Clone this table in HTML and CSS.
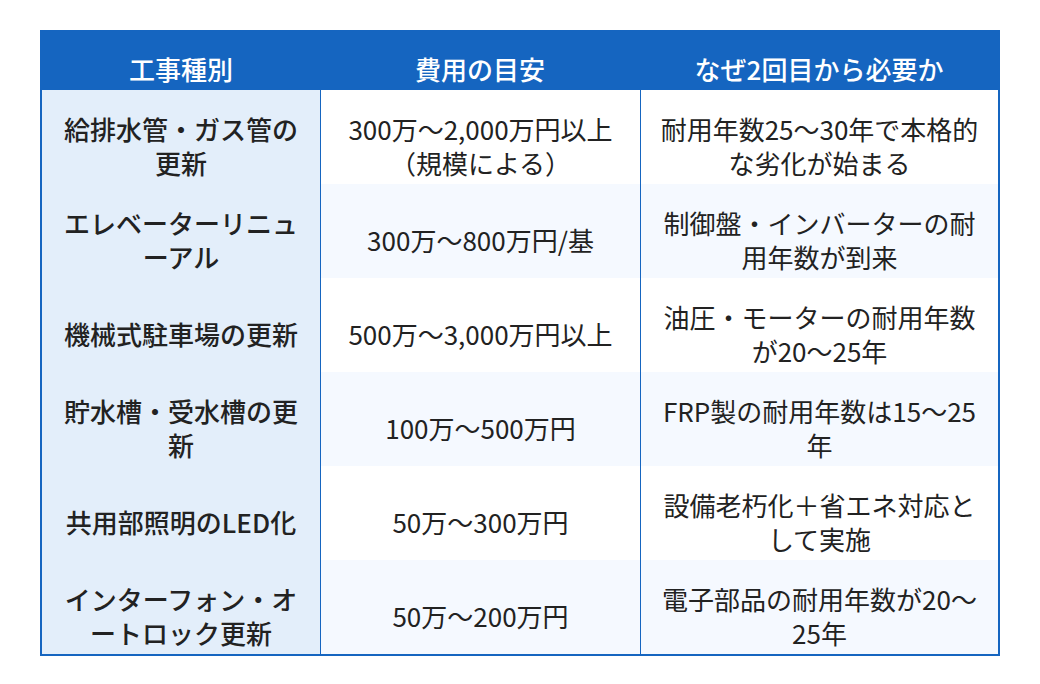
FILE: index.html
```html
<!DOCTYPE html>
<html lang="ja">
<head>
<meta charset="utf-8">
<title>2回目の大規模修繕で必要になる工事</title>
<link rel="stylesheet" href="styles.css">
</head>
<body>
<table class="cost-table">
  <colgroup>
    <col class="col-type">
    <col class="col-cost">
    <col class="col-reason">
  </colgroup>
  <thead>
    <tr>
      <th>工事種別</th>
      <th>費用の目安</th>
      <th>なぜ2回目から必要か</th>
    </tr>
  </thead>
  <tbody>
    <tr>
      <td class="type">給排水管・ガス管の更新</td>
      <td>300万～2,000万円以上（規模による）</td>
      <td>耐用年数25～30年で本格的な劣化が始まる</td>
    </tr>
    <tr>
      <td class="type">エレベーターリニューアル</td>
      <td>300万～800万円/基</td>
      <td>制御盤・インバーターの耐用年数が到来</td>
    </tr>
    <tr>
      <td class="type">機械式駐車場の更新</td>
      <td>500万～3,000万円以上</td>
      <td>油圧・モーターの耐用年数が20～25年</td>
    </tr>
    <tr>
      <td class="type">貯水槽・受水槽の更新</td>
      <td>100万～500万円</td>
      <td>FRP製の耐用年数は15～25年</td>
    </tr>
    <tr>
      <td class="type">共用部照明のLED化</td>
      <td>50万～300万円</td>
      <td>設備老朽化＋省エネ対応として実施</td>
    </tr>
    <tr>
      <td class="type">インターフォン・オートロック更新</td>
      <td>50万～200万円</td>
      <td>電子部品の耐用年数が20～25年</td>
    </tr>
  </tbody>
</table>
</body>
</html>
```
FILE: styles.css
```css
html, body {
  margin: 0;
  padding: 0;
  background: #ffffff;
}

body {
  padding: 30px 40px;
  font-family: "Noto Sans CJK JP", "Noto Sans", sans-serif;
  color: #222222;
}

.cost-table {
  width: 960px;
  table-layout: fixed;
  border-collapse: separate;
  border-spacing: 0;
  border: 2px solid #1565c0;
  font-size: 26px;
  line-height: 34px;
  line-break: loose;
}

.col-type { width: 278px; }
.col-cost { width: 320px; }
.col-reason { width: 358px; }

.cost-table th {
  background: #1565c0;
  color: #ffffff;
  font-weight: 500;
  height: 34px;
  padding: 20px 16px 4px;
  text-align: center;
}

.cost-table td {
  height: 68px;
  padding: 22px 16px 4px;
  text-align: center;
  vertical-align: middle;
  border-left: 1px solid #1565c0;
  background: #ffffff;
}

.cost-table tbody tr:nth-child(even) td {
  background: #f5f9ff;
}

.cost-table td.type,
.cost-table tbody tr:nth-child(even) td.type {
  border-left: none;
  background: #e3eefa;
  font-weight: 500;
}

.cost-table tbody tr:last-child td {
  height: 66px;
}
```
